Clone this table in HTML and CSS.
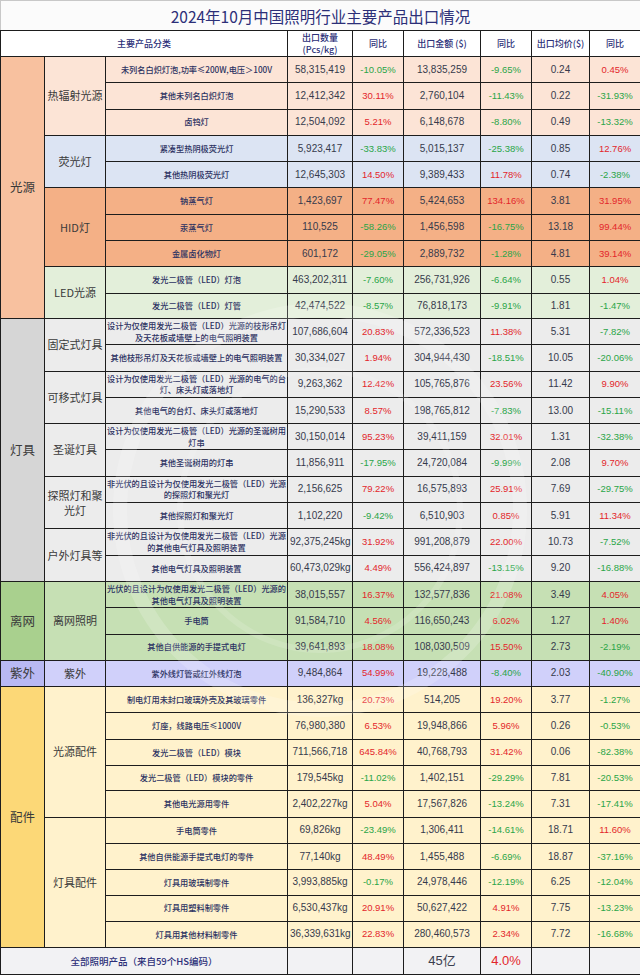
FILE: index.html
```html
<!DOCTYPE html>
<html lang="zh-CN">
<head>
<meta charset="utf-8">
<title>2024年10月中国照明行业主要产品出口情况</title>
<link rel="stylesheet" href="styles.css">
</head>
<body>
<div class="wrap">
<table class="sheet">
<colgroup>
<col class="w-cat"><col class="w-sub"><col class="w-prod"><col class="w-qty"><col class="w-pct"><col class="w-amt"><col class="w-pct"><col class="w-avg"><col class="w-pct2">
</colgroup>
<thead>
<tr class="title-row"><th colspan="9" class="title">2024年10月中国照明行业主要产品出口情况</th></tr>
<tr class="head-row">
<th colspan="3">主要产品分类</th>
<th>出口数量<br>(Pcs/kg)</th>
<th>同比</th>
<th>出口金额 ($)</th>
<th>同比</th>
<th>出口均价($)</th>
<th>同比</th>
</tr>
</thead>
<tbody>
<tr class="r peach"><td rowspan="10" class="cat cat-light">光源</td><td rowspan="3" class="sub">热辐射光源</td><td class="prod">未列名白炽灯泡,功率≤200W,电压＞100V</td><td class="num">58,315,419</td><td class="pct g">-10.05%</td><td class="num">13,835,259</td><td class="pct g">-9.65%</td><td class="num">0.24</td><td class="pct r">0.45%</td></tr>
<tr class="r peach"><td class="prod">其他未列名白炽灯泡</td><td class="num">12,412,342</td><td class="pct r">30.11%</td><td class="num">2,760,104</td><td class="pct g">-11.43%</td><td class="num">0.22</td><td class="pct g">-31.93%</td></tr>
<tr class="r peach"><td class="prod">卤钨灯</td><td class="num">12,504,092</td><td class="pct r">5.21%</td><td class="num">6,148,678</td><td class="pct g">-8.80%</td><td class="num">0.49</td><td class="pct g">-13.32%</td></tr>
<tr class="r blue"><td rowspan="2" class="sub">荧光灯</td><td class="prod">紧凑型热阴极荧光灯</td><td class="num">5,923,417</td><td class="pct g">-33.83%</td><td class="num">5,015,137</td><td class="pct g">-25.38%</td><td class="num">0.85</td><td class="pct r">12.76%</td></tr>
<tr class="r blue"><td class="prod">其他热阴极荧光灯</td><td class="num">12,645,303</td><td class="pct r">14.50%</td><td class="num">9,389,433</td><td class="pct r">11.78%</td><td class="num">0.74</td><td class="pct g">-2.38%</td></tr>
<tr class="r orange"><td rowspan="3" class="sub">HID灯</td><td class="prod">钠蒸气灯</td><td class="num">1,423,697</td><td class="pct r">77.47%</td><td class="num">5,424,653</td><td class="pct r">134.16%</td><td class="num">3.81</td><td class="pct r">31.95%</td></tr>
<tr class="r orange"><td class="prod">汞蒸气灯</td><td class="num">110,525</td><td class="pct g">-58.26%</td><td class="num">1,456,598</td><td class="pct g">-16.75%</td><td class="num">13.18</td><td class="pct r">99.44%</td></tr>
<tr class="r orange"><td class="prod">金属卤化物灯</td><td class="num">601,172</td><td class="pct g">-29.05%</td><td class="num">2,889,732</td><td class="pct g">-1.28%</td><td class="num">4.81</td><td class="pct r">39.14%</td></tr>
<tr class="r green"><td rowspan="2" class="sub">LED光源</td><td class="prod">发光二极管（LED）灯泡</td><td class="num">463,202,311</td><td class="pct g">-7.60%</td><td class="num">256,731,926</td><td class="pct g">-6.64%</td><td class="num">0.55</td><td class="pct r">1.04%</td></tr>
<tr class="r green"><td class="prod">发光二极管（LED）灯管</td><td class="num">42,474,522</td><td class="pct g">-8.57%</td><td class="num">76,818,173</td><td class="pct g">-9.91%</td><td class="num">1.81</td><td class="pct g">-1.47%</td></tr>

<tr class="r gray"><td rowspan="10" class="cat cat-lamp">灯具</td><td rowspan="2" class="sub">固定式灯具</td><td class="prod">设计为仅使用发光二极管（LED）光源的枝形吊灯及天花板或墙壁上的电气照明装置</td><td class="num">107,686,604</td><td class="pct r">20.83%</td><td class="num">572,336,523</td><td class="pct r">11.38%</td><td class="num">5.31</td><td class="pct g">-7.82%</td></tr>
<tr class="r gray"><td class="prod">其他枝形吊灯及天花板或墙壁上的电气照明装置</td><td class="num">30,334,027</td><td class="pct r">1.94%</td><td class="num">304,944,430</td><td class="pct g">-18.51%</td><td class="num">10.05</td><td class="pct g">-20.06%</td></tr>
<tr class="r gray"><td rowspan="2" class="sub">可移式灯具</td><td class="prod">设计为仅使用发光二极管（LED）光源的电气的台灯、床头灯或落地灯</td><td class="num">9,263,362</td><td class="pct r">12.42%</td><td class="num">105,765,876</td><td class="pct r">23.56%</td><td class="num">11.42</td><td class="pct r">9.90%</td></tr>
<tr class="r gray"><td class="prod">其他电气的台灯、床头灯或落地灯</td><td class="num">15,290,533</td><td class="pct r">8.57%</td><td class="num">198,765,812</td><td class="pct g">-7.83%</td><td class="num">13.00</td><td class="pct g">-15.11%</td></tr>
<tr class="r gray"><td rowspan="2" class="sub">圣诞灯具</td><td class="prod">设计为仅使用发光二极管（LED）光源的圣诞树用灯串</td><td class="num">30,150,014</td><td class="pct r">95.23%</td><td class="num">39,411,159</td><td class="pct r">32.01%</td><td class="num">1.31</td><td class="pct g">-32.38%</td></tr>
<tr class="r gray"><td class="prod">其他圣诞树用的灯串</td><td class="num">11,856,911</td><td class="pct g">-17.95%</td><td class="num">24,720,084</td><td class="pct g">-9.99%</td><td class="num">2.08</td><td class="pct r">9.70%</td></tr>
<tr class="r gray"><td rowspan="2" class="sub">探照灯和聚光灯</td><td class="prod">非光伏的且设计为仅使用发光二极管（LED）光源的探照灯和聚光灯</td><td class="num">2,156,625</td><td class="pct r">79.22%</td><td class="num">16,575,893</td><td class="pct r">25.91%</td><td class="num">7.69</td><td class="pct g">-29.75%</td></tr>
<tr class="r gray"><td class="prod">其他探照灯和聚光灯</td><td class="num">1,102,220</td><td class="pct g">-9.42%</td><td class="num">6,510,903</td><td class="pct r">0.85%</td><td class="num">5.91</td><td class="pct r">11.34%</td></tr>
<tr class="r gray"><td rowspan="2" class="sub">户外灯具等</td><td class="prod">非光伏的且设计为仅使用发光二极管（LED）光源的其他电气灯具及照明装置</td><td class="num">92,375,245kg</td><td class="pct r">31.92%</td><td class="num">991,208,879</td><td class="pct r">22.00%</td><td class="num">10.73</td><td class="pct g">-7.52%</td></tr>
<tr class="r gray"><td class="prod">其他电气灯具及照明装置</td><td class="num">60,473,029kg</td><td class="pct r">4.49%</td><td class="num">556,424,897</td><td class="pct g">-13.15%</td><td class="num">9.20</td><td class="pct g">-16.88%</td></tr>

<tr class="r offgrid"><td rowspan="3" class="cat cat-off">离网</td><td rowspan="3" class="sub">离网照明</td><td class="prod">光伏的且设计为仅使用发光二极管（LED）光源的其他电气灯具及照明装置</td><td class="num">38,015,557</td><td class="pct r">16.37%</td><td class="num">132,577,836</td><td class="pct r">21.08%</td><td class="num">3.49</td><td class="pct r">4.05%</td></tr>
<tr class="r offgrid"><td class="prod">手电筒</td><td class="num">91,584,710</td><td class="pct r">4.56%</td><td class="num">116,650,243</td><td class="pct r">6.02%</td><td class="num">1.27</td><td class="pct r">1.40%</td></tr>
<tr class="r offgrid"><td class="prod">其他自供能源的手提式电灯</td><td class="num">39,641,893</td><td class="pct r">18.08%</td><td class="num">108,030,509</td><td class="pct r">15.50%</td><td class="num">2.73</td><td class="pct g">-2.19%</td></tr>

<tr class="r uv"><td class="cat cat-uv">紫外</td><td class="sub">紫外</td><td class="prod">紫外线灯管或红外线灯泡</td><td class="num">9,484,864</td><td class="pct r">54.99%</td><td class="num">19,228,488</td><td class="pct g">-8.40%</td><td class="num">2.03</td><td class="pct g">-40.90%</td></tr>

<tr class="r yellow"><td rowspan="10" class="cat cat-acc">配件</td><td rowspan="5" class="sub">光源配件</td><td class="prod">制电灯用未封口玻璃外壳及其玻璃零件</td><td class="num">136,327kg</td><td class="pct r">20.73%</td><td class="num">514,205</td><td class="pct r">19.20%</td><td class="num">3.77</td><td class="pct g">-1.27%</td></tr>
<tr class="r yellow"><td class="prod">灯座，线路电压≤1000V</td><td class="num">76,980,380</td><td class="pct r">6.53%</td><td class="num">19,948,866</td><td class="pct r">5.96%</td><td class="num">0.26</td><td class="pct g">-0.53%</td></tr>
<tr class="r yellow"><td class="prod">发光二极管（LED）模块</td><td class="num">711,566,718</td><td class="pct r">645.84%</td><td class="num">40,768,793</td><td class="pct r">31.42%</td><td class="num">0.06</td><td class="pct g">-82.38%</td></tr>
<tr class="r yellow"><td class="prod">发光二极管（LED）模块的零件</td><td class="num">179,545kg</td><td class="pct g">-11.02%</td><td class="num">1,402,151</td><td class="pct g">-29.29%</td><td class="num">7.81</td><td class="pct g">-20.53%</td></tr>
<tr class="r yellow"><td class="prod">其他电光源用零件</td><td class="num">2,402,227kg</td><td class="pct r">5.04%</td><td class="num">17,567,826</td><td class="pct g">-13.24%</td><td class="num">7.31</td><td class="pct g">-17.41%</td></tr>
<tr class="r yellow"><td rowspan="5" class="sub">灯具配件</td><td class="prod">手电筒零件</td><td class="num">69,826kg</td><td class="pct g">-23.49%</td><td class="num">1,306,411</td><td class="pct g">-14.61%</td><td class="num">18.71</td><td class="pct r">11.60%</td></tr>
<tr class="r yellow"><td class="prod">其他自供能源手提式电灯的零件</td><td class="num">77,140kg</td><td class="pct r">48.49%</td><td class="num">1,455,488</td><td class="pct g">-6.69%</td><td class="num">18.87</td><td class="pct g">-37.16%</td></tr>
<tr class="r yellow"><td class="prod">灯具用玻璃制零件</td><td class="num">3,993,885kg</td><td class="pct g">-0.17%</td><td class="num">24,978,446</td><td class="pct g">-12.19%</td><td class="num">6.25</td><td class="pct g">-12.04%</td></tr>
<tr class="r yellow"><td class="prod">灯具用塑料制零件</td><td class="num">6,530,437kg</td><td class="pct r">20.91%</td><td class="num">50,627,422</td><td class="pct r">4.91%</td><td class="num">7.75</td><td class="pct g">-13.23%</td></tr>
<tr class="r yellow"><td class="prod">灯具用其他材料制零件</td><td class="num">36,339,631kg</td><td class="pct r">22.83%</td><td class="num">280,460,573</td><td class="pct r">2.34%</td><td class="num">7.72</td><td class="pct g">-16.68%</td></tr>

<tr class="total-row"><td colspan="3" class="total-label">全部照明产品（来自59个HS编码）</td><td></td><td></td><td class="total-num">45亿</td><td class="total-pct">4.0%</td><td></td><td></td></tr>
</tbody>
</table>
<svg class="watermark" width="440" height="440" viewBox="0 0 440 440" aria-hidden="true">
<circle cx="220" cy="220" r="200" fill="none" stroke="#ffffff" stroke-opacity="0.18" stroke-width="14"/>
<circle cx="220" cy="220" r="140" fill="none" stroke="#ffffff" stroke-opacity="0.14" stroke-width="6"/>
</svg>
</div>
</body>
</html>
```
FILE: styles.css
```css
html, body {
  margin: 0;
  padding: 0;
  background: #ffffff;
}
.wrap {
  position: relative;
  width: 640px;
  height: 976px;
  overflow: hidden;
}
.sheet {
  width: 640px;
  border-collapse: collapse;
  table-layout: fixed;
  font-family: "Liberation Sans", "Noto Sans CJK SC", sans-serif;
  color: #3a3e4e;
}
.w-cat { width: 44px; }
.w-sub { width: 61px; }
.w-prod { width: 182px; }
.w-qty { width: 65px; }
.w-pct { width: 51px; }
.w-amt { width: 77px; }
.w-avg { width: 58px; }
.w-pct2 { width: 51px; }

.sheet th, .sheet td {
  border: 1.5px solid #1d1d1d;
  padding: 0 2px;
  text-align: center;
  vertical-align: middle;
  overflow: hidden;
  line-height: 12px;
}
.title-row { height: 30px; }
.title {
  font-family: "Noto Sans CJK SC", "Liberation Sans", sans-serif;
  font-size: 15.5px;
  font-weight: 400;
  line-height: 20px !important;
  color: #2c2f78;
  background: #fbfbfb;
  border-top: 1px solid #c8c8c8 !important;
  border-left: 1px solid #c8c8c8 !important;
  border-right: 1px solid #c8c8c8 !important;
}
.head-row { height: 26px; }
.head-row th {
  font-family: "Noto Sans CJK SC", "Liberation Sans", sans-serif;
  font-size: 9px;
  font-weight: 500;
  line-height: 12px;
  color: #2c2f78;
  background: #ffffff;
}
.r { height: 25.3px; }
.cat {
  font-family: "Noto Sans CJK SC", sans-serif;
  font-size: 12.5px;
  color: #3a3a3a;
}
.sheet td.sub {
  font-family: "Noto Sans CJK SC", sans-serif;
  font-size: 11px;
  line-height: 15px;
  color: #3a3a3a;
}
.sheet td.prod {
  font-family: "Noto Sans CJK SC", sans-serif;
  font-size: 8.2px;
  line-height: 11.5px;
  padding: 0 1px;
  color: #2c3262;
  font-weight: 500;
}
.num {
  font-size: 10px;
  color: #363a4c;
}
.pct {
  font-size: 9.5px;
}
.pct.r { color: #e3262b; }
.pct.g { color: #2aa547; }

.peach td { background: #fce4d6; }
.blue td { background: #dce4f3; }
.orange td { background: #f4b086; }
.green td { background: #e3efda; }
.gray td { background: #ececec; }
.offgrid td { background: #c6e0b4; }
.uv td { background: #d0d0fa; }
.yellow td { background: #fff2cc; }

.sheet td.cat-light { background: #f8c19f; }
.sheet td.cat-lamp { background: #d6d6d6; }
.sheet td.cat-off { background: #a9d08e; }
.sheet td.cat-uv { background: #b9b9f3; }
.sheet td.cat-acc { background: #fcd877; }

.total-row { height: 27px; }
.total-row td { background: #f2f2f4; }
.sheet td.total-label {
  font-family: "Noto Sans CJK SC", sans-serif;
  font-size: 9.5px;
  font-weight: 500;
  color: #2c2f78;
}
.total-num {
  font-family: "Liberation Sans", "Noto Sans CJK SC", sans-serif;
  font-size: 13px;
  color: #3a3e4e;
}
.total-pct {
  font-size: 13px;
  color: #e3262b;
}
.watermark {
  position: absolute;
  left: 100px;
  top: 290px;
  pointer-events: none;
}
```
